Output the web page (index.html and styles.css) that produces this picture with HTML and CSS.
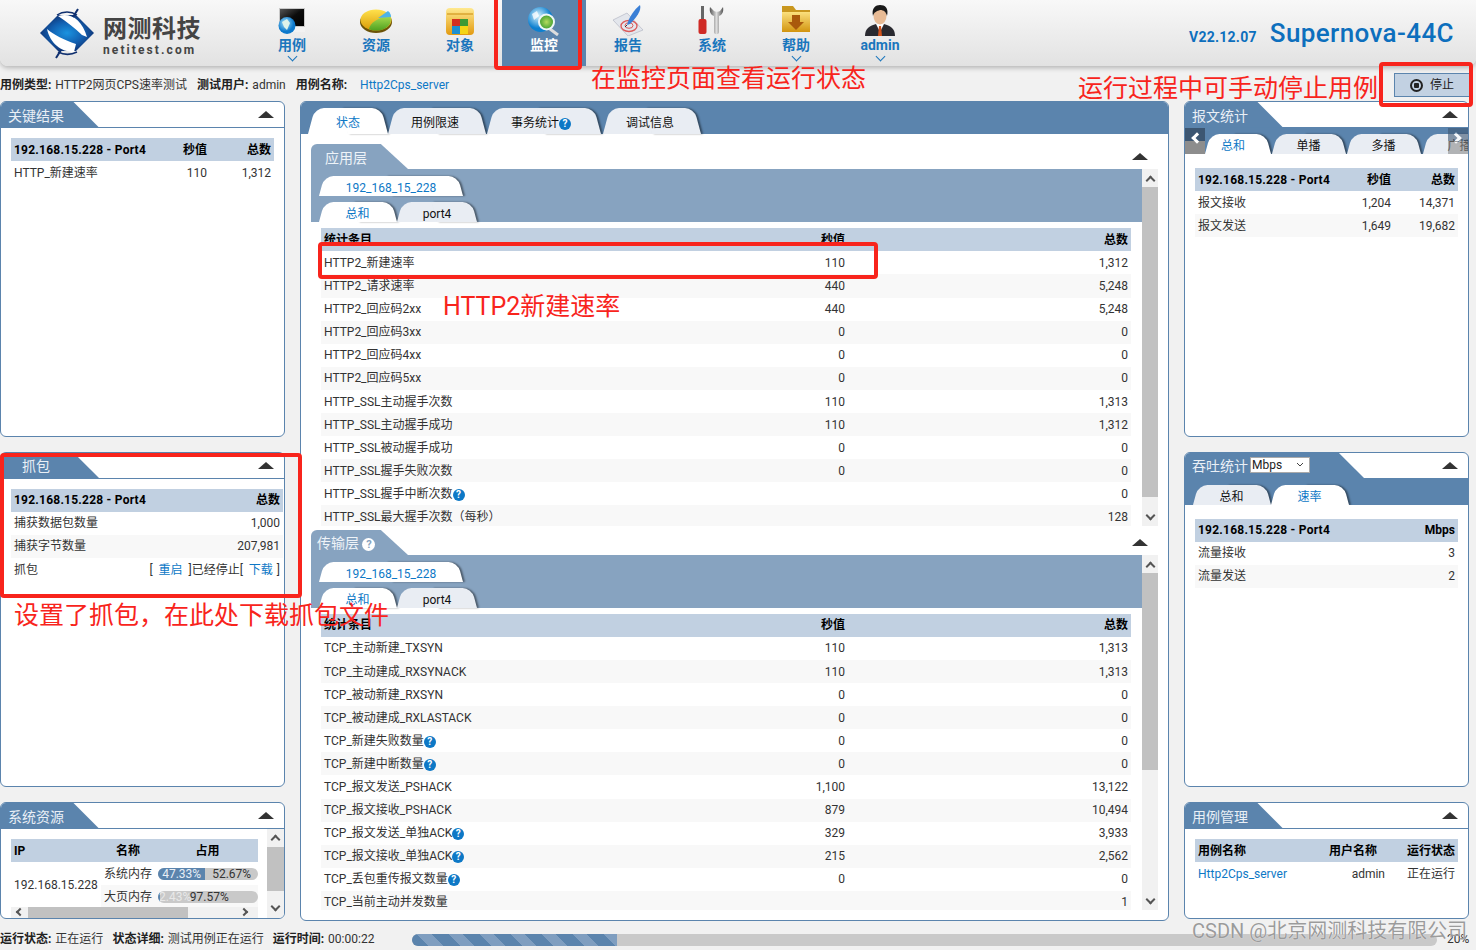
FILE: index.html
```html
<!DOCTYPE html>
<html lang="zh-CN">
<head>
<meta charset="utf-8">
<title>Supernova-44C</title>
<link rel="stylesheet" href="styles.css">
</head>
<body>
<header class="topbar">
  <div class="logo">
    <svg class="logo-mark" width="56" height="52" viewBox="0 0 56 52">
      <defs><radialGradient id="lg" cx=".5" cy=".5" r=".55"><stop offset="0" stop-color="#1a93e0"/><stop offset=".55" stop-color="#125fb0"/><stop offset="1" stop-color="#10306f"/></radialGradient></defs>
      <path d="M1 25 L19 7 H37 L55 25 L37 43 H19 Z" fill="url(#lg)"/>
      <path d="M19 8 C31 4 43 11 48 29 L43 27 C36 20 28 14 19 8 Z" fill="#fff"/>
      <path d="M8 21 C15 27 25 32 37 36 L35 44 C22 44 11 35 8 21 Z" fill="#fff"/>
      <path d="M39 1 L34 9 M17 50 L22 42" stroke="#10306f" stroke-width="2" fill="none"/>
      <path d="M18 7 C24 3 32 3 38 7 M38 44 C32 47 25 47 19 44" stroke="#10306f" stroke-width="1.5" fill="none"/>
    </svg>
    <div class="logo-text">
      <div class="logo-cn">网测科技</div>
      <div class="logo-en">netitest.com</div>
    </div>
  </div>
  <nav class="nav">
    <div class="nav-item">
      <svg width="32" height="31" viewBox="0 0 32 31"><defs><radialGradient id="g1" cx=".4" cy=".35"><stop offset="0" stop-color="#a6e2f9"/><stop offset="1" stop-color="#0b78cc"/></radialGradient><linearGradient id="s1" x1="0" y1="0" x2="1" y2="1"><stop offset="0" stop-color="#555"/><stop offset=".5" stop-color="#0c0c0c"/><stop offset="1" stop-color="#000"/></linearGradient></defs><path d="M3 3 H29 V24 H3 Z" fill="#c9c9c9"/><rect x="4" y="4" width="24" height="17" fill="url(#s1)"/><path d="M10 22 H29 V27 H10 Z" fill="#f2f2f2"/><circle cx="11" cy="20.5" r="8.5" fill="url(#g1)"/><path d="M6 17 L11 14 L14 18 L11 25 L8 22 Z" fill="#dff3ea"/></svg>
      <span class="nav-label">用例</span><i class="nav-chev"></i>
    </div>
    <div class="nav-item">
      <svg width="32" height="31" viewBox="0 0 32 31"><defs><linearGradient id="g2" x1="0" y1="0" x2="0" y2="1"><stop offset="0" stop-color="#ffe24d"/><stop offset="1" stop-color="#d99a06"/></linearGradient><linearGradient id="g2b" x1="0" y1="0" x2="0" y2="1"><stop offset="0" stop-color="#a8dc4f"/><stop offset="1" stop-color="#4fa120"/></linearGradient></defs><ellipse cx="16" cy="17" rx="16" ry="11" fill="#6b5308"/><ellipse cx="16" cy="15" rx="15.5" ry="10.5" fill="url(#g2)"/><path d="M9 24 C10 18 18 12 30 11 C32 16 30 21 24 24 C19 26 13 26 9 24 Z" fill="url(#g2b)"/><path d="M18 13 L28 6 C30 8 31 9 31 12 Z" fill="#4eb3e8"/></svg>
      <span class="nav-label">资源</span>
    </div>
    <div class="nav-item">
      <svg width="32" height="31" viewBox="0 0 32 31"><defs><linearGradient id="g3" x1="0" y1="0" x2="0" y2="1"><stop offset="0" stop-color="#ffe98f"/><stop offset="1" stop-color="#e29a10"/></linearGradient></defs><path d="M2 7 Q2 3 6 3 H26 Q30 3 30 7 V26 Q30 30 26 30 H6 Q2 30 2 26 Z" fill="url(#g3)"/><path d="M3 9 H29" stroke="#c98a10"/><rect x="8" y="14" width="8" height="7" fill="#d22f1f"/><rect x="16" y="14" width="8" height="7" fill="#3d9a34"/><rect x="8" y="21" width="8" height="8" fill="#1b8fd0"/><rect x="16" y="21" width="8" height="8" fill="#f4d516"/></svg>
      <span class="nav-label">对象</span>
    </div>
    <div class="nav-item is-active">
      <svg width="32" height="31" viewBox="0 0 32 31"><defs><radialGradient id="g4" cx=".4" cy=".35"><stop offset="0" stop-color="#d6f3fd"/><stop offset="1" stop-color="#0d80d0"/></radialGradient><radialGradient id="g4b"><stop offset="0" stop-color="#b6dc5e"/><stop offset="1" stop-color="#3c9c2f"/></radialGradient></defs><circle cx="12.5" cy="14.5" r="12.5" fill="url(#g4)"/><path d="M22 24 L30 30" stroke="#ddd" stroke-width="3"/><circle cx="18.5" cy="17" r="7.5" fill="url(#g4b)" stroke="#eef6f6" stroke-width="2"/><path d="M4 9 L9 6 L11 11 L6 15 Z" fill="#fff" opacity=".75"/></svg>
      <span class="nav-label">监控</span>
    </div>
    <div class="nav-item">
      <svg width="32" height="31" viewBox="0 0 32 31"><path d="M1 15 L15 8 L31 25 L16 31 Z" fill="#e3e6ec" stroke="#b4b8c4" stroke-width=".7"/><ellipse cx="17" cy="21" rx="8" ry="5.5" fill="none" stroke="#dc5a5a" stroke-width="1.3"/><ellipse cx="17" cy="20.5" rx="4" ry="2.8" fill="none" stroke="#dc5a5a"/><path d="M28 0 C30 5 24 13 18 19 L15 20 C17 12 22 5 28 0 Z" fill="#3a7fd6"/><path d="M15 20 L13 22" stroke="#333"/></svg>
      <span class="nav-label">报告</span>
    </div>
    <div class="nav-item">
      <svg width="32" height="31" viewBox="0 0 32 31"><defs><linearGradient id="g6" x1="0" y1="0" x2="1" y2="0"><stop offset="0" stop-color="#555"/><stop offset=".5" stop-color="#ddd"/><stop offset="1" stop-color="#555"/></linearGradient></defs><rect x="5" y="1" width="3" height="13" fill="#666"/><rect x="2.500" y="14" width="8" height="15" rx="2" fill="#cf2a25"/><path d="M14 2 C13 7 15 10 18 11 V27 C18 30 23 30 23 27 V11 C26 10 28 7 27 2 L24 6 C23 7 19 7 18 6 Z" fill="url(#g6)"/></svg>
      <span class="nav-label">系统</span>
    </div>
    <div class="nav-item">
      <svg width="32" height="31" viewBox="0 0 32 31"><defs><linearGradient id="g5" x1="0" y1="0" x2="0" y2="1"><stop offset="0" stop-color="#fbe07d"/><stop offset="1" stop-color="#d2940f"/></linearGradient></defs><path d="M2 1 H13 L16 5 H30 V27 H2 Z" fill="#c9971f"/><path d="M2 7 H30 V27 H2 Z" fill="url(#g5)"/><path d="M12 10 H20 V17 H24 L16 25 L8 17 H12 Z" fill="#a9590c"/></svg>
      <span class="nav-label">帮助</span><i class="nav-chev"></i>
    </div>
    <div class="nav-item">
      <svg width="32" height="31" viewBox="0 0 32 31"><path d="M1 31 C1 23 6 21 12 19 H20 C26 21 31 23 31 31 Z" fill="#2a2a30"/><path d="M12 19 L16 27 L20 19 Z" fill="#fff"/><path d="M15 21 H17 L18 31 H14 Z" fill="#d2521b"/><ellipse cx="16" cy="11" rx="6.500" ry="8.500" fill="#e8bb95"/><path d="M9 11 C7 3 12 0 16 0 C21 0 25 3 23 11 C22 7 20 5 16 5 C13 6 10 7 9 11 Z" fill="#1a1a1a"/></svg>
      <span class="nav-label">admin</span><i class="nav-chev"></i>
    </div>
  </nav>
  <div class="brand">
    <span class="brand-ver">V22.12.07</span>
    <span class="brand-name">Supernova-44C</span>
  </div>
</header>

<div class="infobar">
  <div class="info-text">
    <span><b>用例类型:</b> HTTP2网页CPS速率测试</span>
    <span><b>测试用户:</b> admin</span>
    <span class="info-case"><b>用例名称:</b> <a class="link">Http2Cps_server</a></span>
  </div>
  <button class="stop-btn"><i class="stop-ico"></i>停止</button>
</div>

<main class="main">
  <section class="col">
    <div class="panel p-key">
      <div class="panel-head"><div class="ptitle">关键结果</div><i class="tri"></i></div>
      <div class="dtable t-key">
        <div class="row head"><span class="ipx">192.168.15.228 - Port4</span><span class="r">秒值</span><span class="r">总数</span></div>
        <div class="row"><span>HTTP_新建速率</span><span class="r">110</span><span class="r">1,312</span></div>
      </div>
    </div>
    <div class="panel p-cap">
      <div class="panel-head"><div class="ptitle ptitle-cap">抓包</div><i class="tri"></i></div>
      <div class="dtable t-cap">
        <div class="row head"><span class="ipx">192.168.15.228 - Port4</span><span class="r">总数</span></div>
        <div class="row"><span>捕获数据包数量</span><span class="r">1,000</span></div>
        <div class="row"><span>捕获字节数量</span><span class="r">207,981</span></div>
        <div class="row row-act"><span>抓包</span><span class="r">[ &nbsp;<a class="link">重启</a>&nbsp; ]已经停止[ &nbsp;<a class="link link-last">下载</a>&nbsp; ]</span></div>
      </div>
    </div>
    <div class="panel p-sys">
      <div class="panel-head"><div class="ptitle ptitle-low">系统资源</div><i class="tri"></i></div>
      <div class="sys-body">
        <div class="sys-main">
          <div class="sys-table">
            <div class="sys-head"><span class="sys-ip">IP</span><span class="sys-nm">名称</span><span class="sys-use">占用</span></div>
            <div class="sys-data">
              <div class="sys-ipcell">192.168.15.228</div>
              <div class="sys-rows">
                <div class="sys-row"><span class="sys-label">系统内存</span><div class="bar"><div class="bar-fill" style="width:47.33%">47.33%</div><div class="bar-rest">52.67%</div></div></div>
                <div class="sys-row alt"><span class="sys-label">大页内存</span><div class="bar"><div class="bar-fill small" style="width:2.43%">2.43%</div><div class="bar-rest">97.57%</div></div></div>
              </div>
            </div>
          </div>
          <div class="hbar"><i class="chev-l"></i><div class="hthumb"></div><i class="chev-r"></i></div>
        </div>
        <div class="vbar vbar-sys"><div class="vbtn"><i class="chev-u"></i></div><div class="vtrack"><div class="thumb thumb-s"></div></div><div class="vbtn"><i class="chev-d"></i></div></div>
      </div>
    </div>
  </section>

  <section class="panel center">
    <div class="tabs-top">
      <div class="tab t80 on">状态</div>
      <div class="tab t97 mr2">用例限速</div>
      <div class="tab t113 mr3">事务统计<i class="q">?</i></div>
      <div class="tab t97">调试信息</div>
    </div>
    <div class="center-body">
      <div class="sub sub-a">
        <div class="sub-head"><div class="stitle">应用层</div><i class="tri"></i></div>
        <div class="sub-body">
          <div class="sub-content">
            <div class="band">
              <div class="tabrow"><div class="tab t144 on small-h">192_168_15_228</div></div>
              <div class="tabrow"><div class="tab t77 on small-h">总和</div><div class="tab t80 small-h">port4</div></div>
            </div>
            <div class="dtable t-main">
              <div class="row head"><span>统计条目</span><span class="r">秒值</span><span class="r">总数</span></div>
              <div class="row"><span>HTTP2_新建速率</span><span class="r">110</span><span class="r">1,312</span></div>
              <div class="row"><span>HTTP2_请求速率</span><span class="r">440</span><span class="r">5,248</span></div>
              <div class="row"><span>HTTP2_回应码2xx</span><span class="r">440</span><span class="r">5,248</span></div>
              <div class="row"><span>HTTP2_回应码3xx</span><span class="r">0</span><span class="r">0</span></div>
              <div class="row"><span>HTTP2_回应码4xx</span><span class="r">0</span><span class="r">0</span></div>
              <div class="row"><span>HTTP2_回应码5xx</span><span class="r">0</span><span class="r">0</span></div>
              <div class="row"><span>HTTP_SSL主动握手次数</span><span class="r">110</span><span class="r">1,313</span></div>
              <div class="row"><span>HTTP_SSL主动握手成功</span><span class="r">110</span><span class="r">1,312</span></div>
              <div class="row"><span>HTTP_SSL被动握手成功</span><span class="r">0</span><span class="r">0</span></div>
              <div class="row"><span>HTTP_SSL握手失败次数</span><span class="r">0</span><span class="r">0</span></div>
              <div class="row"><span>HTTP_SSL握手中断次数<i class="q">?</i></span><span class="r"></span><span class="r">0</span></div>
              <div class="row"><span>HTTP_SSL最大握手次数（每秒）</span><span class="r"></span><span class="r">128</span></div>
            </div>
          </div>
          <div class="vbar"><div class="vbtn"><i class="chev-u"></i></div><div class="vtrack"><div class="thumb thumb-a"></div></div><div class="vbtn"><i class="chev-d"></i></div></div>
        </div>
      </div>
      <div class="sub sub-b">
        <div class="sub-head"><div class="stitle stitle-b">传输层 <i class="q q-light">?</i></div><i class="tri"></i></div>
        <div class="sub-body">
          <div class="sub-content">
            <div class="band">
              <div class="tabrow"><div class="tab t144 on small-h">192_168_15_228</div></div>
              <div class="tabrow"><div class="tab t77 on small-h">总和</div><div class="tab t80 small-h">port4</div></div>
            </div>
            <div class="dtable t-main">
              <div class="row head"><span>统计条目</span><span class="r">秒值</span><span class="r">总数</span></div>
              <div class="row"><span>TCP_主动新建_TXSYN</span><span class="r">110</span><span class="r">1,313</span></div>
              <div class="row"><span>TCP_主动建成_RXSYNACK</span><span class="r">110</span><span class="r">1,313</span></div>
              <div class="row"><span>TCP_被动新建_RXSYN</span><span class="r">0</span><span class="r">0</span></div>
              <div class="row"><span>TCP_被动建成_RXLASTACK</span><span class="r">0</span><span class="r">0</span></div>
              <div class="row"><span>TCP_新建失败数量<i class="q">?</i></span><span class="r">0</span><span class="r">0</span></div>
              <div class="row"><span>TCP_新建中断数量<i class="q">?</i></span><span class="r">0</span><span class="r">0</span></div>
              <div class="row"><span>TCP_报文发送_PSHACK</span><span class="r">1,100</span><span class="r">13,122</span></div>
              <div class="row"><span>TCP_报文接收_PSHACK</span><span class="r">879</span><span class="r">10,494</span></div>
              <div class="row"><span>TCP_报文发送_单独ACK<i class="q">?</i></span><span class="r">329</span><span class="r">3,933</span></div>
              <div class="row"><span>TCP_报文接收_单独ACK<i class="q">?</i></span><span class="r">215</span><span class="r">2,562</span></div>
              <div class="row"><span>TCP_丢包重传报文数量<i class="q">?</i></span><span class="r">0</span><span class="r">0</span></div>
              <div class="row"><span>TCP_当前主动并发数量</span><span class="r"></span><span class="r">1</span></div>
            </div>
          </div>
          <div class="vbar"><div class="vbtn"><i class="chev-u"></i></div><div class="vtrack"><div class="thumb thumb-b"></div></div><div class="vbtn"><i class="chev-d"></i></div></div>
        </div>
      </div>
    </div>
  </section>

  <section class="col">
    <div class="panel p-key">
      <div class="panel-head"><div class="ptitle">报文统计</div><i class="tri"></i></div>
      <div class="rband">
        <div class="tab t65 on small-h">总和</div>
        <div class="tab t73 small-h">单播</div>
        <div class="tab t73 small-h">多播</div>
        <div class="tab t73 small-h tab-cut">广播</div>
        <div class="scroller scroller-l"><i class="sc-l"></i></div>
        <div class="scroller scroller-r"><i class="sc-r"></i></div>
      </div>
      <div class="dtable t-pkt">
        <div class="row head"><span class="ipx">192.168.15.228 - Port4</span><span class="r">秒值</span><span class="r">总数</span></div>
        <div class="row"><span>报文接收</span><span class="r">1,204</span><span class="r">14,371</span></div>
        <div class="row"><span>报文发送</span><span class="r">1,649</span><span class="r">19,682</span></div>
      </div>
    </div>
    <div class="panel p-cap">
      <div class="panel-head"><div class="ptitle ptitle-wide">吞吐统计<select class="unit"><option>Mbps</option></select></div><i class="tri"></i></div>
      <div class="rband rband-2">
        <div class="tab t77 small-h">总和</div>
        <div class="tab t77 on small-h">速率</div>
      </div>
      <div class="dtable t-pkt t-thru">
        <div class="row head"><span class="ipx">192.168.15.228 - Port4</span><span class="r">Mbps</span></div>
        <div class="row"><span>流量接收</span><span class="r">3</span></div>
        <div class="row"><span>流量发送</span><span class="r">2</span></div>
      </div>
    </div>
    <div class="panel p-sys">
      <div class="panel-head"><div class="ptitle ptitle-low">用例管理</div><i class="tri"></i></div>
      <div class="dtable t-case">
        <div class="row head"><span>用例名称</span><span class="r hd-user">用户名称</span><span class="r">运行状态</span></div>
        <div class="row"><span><a class="link">Http2Cps_server</a></span><span class="r td-user">admin</span><span class="r">正在运行</span></div>
      </div>
    </div>
  </section>
</main>

<footer class="status">
  <div class="status-text">
    <span><b>运行状态:</b> 正在运行</span>
    <span><b>状态详细:</b> 测试用例正在运行</span>
    <span><b>运行时间:</b> 00:00:22</span>
  </div>
  <div class="progress"><div class="progress-fill"></div></div>
  <div class="pct">20%</div>
</footer>

<div class="mark box-mon"></div>
<div class="mark box-stop"></div>
<div class="mark box-row"></div>
<div class="mark box-cap"></div>
<div class="note note-mon">在监控页面查看运行状态</div>
<div class="note note-stop">运行过程中可手动停止用例</div>
<div class="note note-http">HTTP2新建速率</div>
<div class="note note-cap">设置了抓包，在此处下载抓包文件</div>
<div class="watermark">CSDN @北京网测科技有限公司</div>
</body>
</html>
```
FILE: styles.css
```css
* { box-sizing: border-box; }
html, body { height: 100%; }
body {
  margin: 0;
  width: 1476px;
  height: 950px;
  overflow: hidden;
  position: relative;
  background: #f1f1f1;
  color: #333;
  font: 12px/1.2 Roboto, "Noto Sans CJK SC", sans-serif;
}
b { font-weight: 700; color: #222; margin-right: 1px; }
i { font-style: normal; }
.link { color: #0d78c6; }
.link-last { margin-right: -2px; }

/* top bar */
.topbar {
  height: 66px;
  display: flex;
  background: linear-gradient(#f8f8f8, #e2e2e2);
  border-radius: 0 0 8px 8px;
  box-shadow: 0 2px 5px rgba(0, 0, 0, .25);
  padding-right: 22px;
}
.logo { width: 250px; display: flex; padding: 8px 0 0 39px; gap: 8px; }
.logo-mark { flex: none; }
.logo-text { padding-top: 7px; color: #444; }
.logo-cn { font-size: 24px; line-height: 28px; font-weight: 700; letter-spacing: .5px; }
.logo-en { font-size: 12px; line-height: 14px; font-weight: 700; letter-spacing: 2.1px; }
.nav { display: flex; }
.nav-item {
  width: 84px;
  display: flex;
  flex-direction: column;
  align-items: center;
  padding-top: 5px;
}
.nav-item svg { flex: none; }
.nav-label { margin-top: 1px; font-size: 14px; line-height: 16px; font-weight: 700; color: #1a76bd; }
.nav-chev {
  width: 7px; height: 7px; margin-top: 0;
  border-right: 1.5px solid #1a76bd;
  border-bottom: 1.5px solid #1a76bd;
  transform: rotate(45deg);
}
.is-active { background: #5b84ad; }
.is-active .nav-label { color: #fff; }
.brand { margin-left: auto; display: flex; align-items: baseline; gap: 13px; padding-top: 17px; color: #0d6fbd; }
.brand-ver { font-size: 14px; font-weight: 700; letter-spacing: .25px; }
.brand-name { font-size: 26px; font-weight: 500; line-height: 32px; letter-spacing: .4px; }

/* info line */
.infobar { height: 35px; display: flex; justify-content: space-between; padding: 7px 6px 4px 0; }
.info-text { display: flex; gap: 10px; padding-top: 5px; }
.info-case b { margin-right: 10px; }
.stop-btn {
  width: 76px; height: 24px;
  background: #c2d1e2;
  border: 1px solid #5b84ad;
  color: #222;
  font: inherit;
  display: flex; align-items: center; justify-content: center; gap: 7px;
  padding: 0;
}
.stop-ico { width: 13px; height: 13px; border-radius: 50%; border: 2px solid #222; position: relative; }
.stop-ico::after { content: ""; position: absolute; inset: 2px; background: #222; border-radius: 1px; }

/* layout */
.main { display: flex; gap: 15px; height: 820px; }
.col { width: 285px; flex: none; display: flex; flex-direction: column; gap: 15px; }
.panel { background: #fff; border: 1px solid #5b84ad; border-radius: 6px; overflow: hidden; }
.col .panel { flex: none; }
.p-key { height: 335.6px; }
.p-cap { height: 335.4px; }
.p-sys { height: 117px; }
.panel-head {
  height: 26px;
  display: flex; justify-content: space-between; align-items: center;
  border-bottom: 1px solid #5b84ad;
}
.ptitle {
  width: 98px; height: 26px;
  background: #5b84ad;
  color: #e9eff6;
  font-size: 14px; line-height: 29px;
  padding-left: 7px;
  clip-path: polygon(0 0, calc(100% - 26px) 0, 100% 100%, 0 100%);
  flex: none;
}
.ptitle-low { line-height: 31px; }
.ptitle-cap { padding-left: 21px; }
.ptitle-wide { width: 179px; display: flex; align-items: center; padding-top: 2px; }
.unit {
  appearance: none;
  width: 60px; height: 16px; margin: 0 0 3px 2px;
  padding: 0 0 0 1px; border: 1px solid #aaa; border-radius: 0;
  background: #fff url("data:image/svg+xml,%3Csvg xmlns='http://www.w3.org/2000/svg' width='8' height='5'%3E%3Cpath d='M1 1l3 3 3-3' fill='none' stroke='%23444'/%3E%3C/svg%3E") no-repeat right 5px center;
  color: #222; font: 12px Roboto, sans-serif;
}
.tri {
  flex: none; width: 0; height: 0; margin-right: 10px;
  border-left: 8px solid transparent;
  border-right: 8px solid transparent;
  border-bottom: 7px solid #333;
}

/* tables */
.dtable { margin: 10px 10px 0; }
.row { display: grid; height: 23.1px; align-items: center; line-height: 14px; white-space: nowrap; }
.row > span { padding: 0 3px; }
.row:nth-child(odd) { background: #f8f8f8; }
.row.head { background: #c1d0e1; color: #000; font-weight: 700; }
.row-act { padding-top: 1px; }
.ipx { letter-spacing: .23px; }
.r { text-align: right; }
.t-key .row { grid-template-columns: 1fr 60px 64px; }
.t-cap { margin-right: 1px; }
.t-cap .row { grid-template-columns: 1fr auto; }
.t-main { margin: 6px 0 0 10px; width: 810px; }
.sub-a .t-main { margin-top: 6.3px; }
.sub-b .t-main { margin-top: 5.8px; }
.t-main .row { grid-template-columns: 1fr 100px 283px; }
.t-pkt { margin-top: 14px; }
.t-pkt .row { grid-template-columns: 1fr 60px 64px; }
.t-thru .row { grid-template-columns: 1fr auto; }
.t-case .row { grid-template-columns: 1fr 87px 59px; }
.row > .td-user { padding-right: 14px; }
.row > .hd-user { padding-right: 22px; }

/* help icon */
.q {
  display: inline-block;
  width: 12px; height: 12px;
  border-radius: 50%;
  background: #0d78c6;
  color: #fff;
  font: 700 10px/12px Roboto, sans-serif;
  text-align: center;
  vertical-align: 0;
}
.q-light { width: 13px; height: 13px; line-height: 13px; font-size: 11px; background: #fff; color: #87a3c0; vertical-align: 0; }

/* tabs */
.tab {
  position: relative; z-index: 0;
  flex: none;
  height: 26px;
  padding-top: 5px;
  display: flex; align-items: center; justify-content: center;
  color: #111;
  white-space: nowrap;
}
.tab::before, .tab::after {
  content: ""; position: absolute; z-index: -1; top: 0; bottom: 0;
  background: #e9edf3;
  transform-origin: bottom;
}
.tab::before { left: 0; right: 50%; border-radius: 9px 0 0 0; transform: skewX(-15deg); }
.tab::after { right: 0; left: 50%; border-radius: 0 9px 0 0; transform: skewX(15deg); box-shadow: 2px 0 2px rgba(0, 0, 0, .45); }
.tab.on { color: #0d78c6; }
.tab.on::before, .tab.on::after { background: #fff; }
.small-h { height: 20px; }
.t65 { width: 65px; padding-right: 9px; }
.t73 { width: 73px; margin-left: 2px; }
.t77 { width: 77px; }
.t80 { width: 80px; }
.t97 { width: 97px; padding-right: 3px; }
.t113 { width: 113px; padding-right: 5px; }
.t144 { width: 144px; }
.mr2 { margin-right: 2px; }
.mr3 { margin-right: 3px; }

/* centre */
.center { width: 869px; flex: none; }
.tabs-top {
  height: 32px;
  background: #5b84ad;
  display: flex; align-items: flex-end;
  padding-left: 7px;
}
.center-body { padding: 10px 10px 0; }
.sub { display: flex; flex-direction: column; }
.sub-a { height: 382px; margin-bottom: 4px; }
.sub-b { height: 380px; }
.sub-head { height: 25px; display: flex; justify-content: space-between; align-items: center; flex: none; }
.stitle {
  width: 97px; height: 25px;
  background: #87a3c0;
  color: #eef3f8;
  font-size: 14px; line-height: 28px;
  padding-left: 14px;
  border-top-left-radius: 6px;
  clip-path: polygon(0 0, 72% 0, 100% 100%, 0 100%);
}
.stitle-b { padding-left: 6px; line-height: 27px; }
.sub-body { flex: 1; min-height: 0; display: flex; }
.sub-content { width: 831px; overflow: hidden; }
.band { height: 53px; background: #87a3c0; padding: 7px 0 0 8px; }
.tabrow { display: flex; margin-bottom: 6px; gap: 1px; }

/* scrollbars */
.vbar { width: 16px; flex: none; background: #f1f1f1; display: flex; flex-direction: column; }
.vbar-sys { width: 17px; }
.vbtn { height: 18px; flex: none; display: flex; align-items: center; justify-content: center; }
.vtrack { flex: 1; min-height: 0; }
.thumb { background: #c1c1c1; }
.thumb-a { height: 310px; }
.thumb-b { height: 197px; }
.thumb-s { height: 44px; }
.chev-u, .chev-d, .chev-l, .chev-r {
  width: 7px; height: 7px; flex: none;
  border-top: 2px solid #555; border-right: 2px solid #555;
}
.chev-u { transform: translateY(2px) rotate(-45deg); }
.chev-d { transform: translateY(-2px) rotate(135deg); }
.chev-l { transform: rotate(-135deg); }
.chev-r { transform: rotate(45deg); }

/* right band */
.rband {
  position: relative;
  height: 26px;
  background: #5b84ad;
  display: flex; align-items: flex-end;
  padding-left: 20px;
  overflow: hidden;
}
.rband-2 { padding-left: 8px; gap: 1px; }
.scroller {
  position: absolute; top: 0; bottom: 0; width: 20px;
  background: linear-gradient(#3c5672 50%, #8d8d8d 50%);
  display: flex; align-items: center; justify-content: center;
}
.scroller-l { left: 0; }
.scroller-r { right: 0; opacity: .6; }
.sc-l, .sc-r { width: 8px; height: 8px; border-top: 3px solid #fff; border-right: 3px solid #fff; }
.sc-l { transform: translate(2px, -3px) rotate(-135deg); }
.sc-r { transform: translate(-2px, -3px) rotate(45deg); }
.tab-cut { margin-left: 3px; }

/* system resources */
.sys-body { display: flex; height: 89px; }
.sys-main { width: 266px; flex: none; padding: 10px 9px 0 10px; display: flex; flex-direction: column; }
.sys-table { flex: 1; min-height: 0; }
.sys-head {
  height: 23px; background: #c1d0e1;
  padding-top: 1px;
  color: #000; font-weight: 700;
  display: grid; grid-template-columns: 90px 52px 1fr; align-items: center;
}
.sys-ip { padding-left: 3px; }
.sys-nm { text-align: center; margin-left: 2px; }
.sys-use { text-align: center; padding-left: 4px; }
.sys-data { display: flex; height: 46px; }
.sys-ipcell { width: 90px; flex: none; padding-left: 3px; align-self: center; white-space: nowrap; }
.sys-rows { flex: 1; }
.sys-row { height: 23px; display: flex; align-items: center; padding: 1px 0 0 3px; gap: 6px; white-space: nowrap; }
.sys-row.alt { background: #f8f8f8; }
.sys-label { width: 48px; flex: none; }
.bar { flex: 1; min-width: 0; height: 12px; display: flex; border-radius: 6px; overflow: hidden; background: #c9c9c9; line-height: 12px; }
.bar-fill { background: #5b84ad; color: #e9eff6; text-align: center; flex: none; }
.bar-fill.small { overflow: visible; color: #e8e8e8; text-indent: 1px; }
.bar-rest { flex: 1; text-align: center; color: #333; }
.hbar { height: 11px; flex: none; background: #f1f1f1; display: flex; align-items: center; padding: 0 6px; margin-top: auto; }
.hbar .chev-l, .hbar .chev-r { width: 6px; height: 6px; }
.hthumb { width: 160px; height: 11px; background: #c1c1c1; margin: 0 53px 0 5px; }

/* status */
.status { height: 29px; padding-top: 8px; display: flex; align-items: center; }
.status-text { width: 412px; flex: none; display: flex; gap: 9px; }
.progress { width: 1025px; height: 12px; background: #c9c9c9; border-radius: 6px; overflow: hidden; flex: none; }
.progress-fill {
  width: 20%; height: 100%;
  background: repeating-linear-gradient(45deg, #5b84ad 0 12px, #7f9ec0 12px 22px);
}
.pct { margin-left: 10px; }

/* annotations drawn over the page */
.mark { position: absolute; border: 4px solid #f8241c; border-radius: 4px; }
.box-mon { left: 494px; top: -4px; width: 88px; height: 74px; }
.box-stop { left: 1379px; top: 62px; width: 94px; height: 45px; }
.box-row { left: 318px; top: 242px; width: 560px; height: 37px; }
.box-cap { left: 0; top: 453px; width: 302px; height: 145px; }
.note { position: absolute; color: #f8241c; font: 25px/30px "Noto Sans CJK SC", sans-serif; white-space: nowrap; }
.note-mon { left: 591px; top: 61px; }
.note-stop { left: 1078px; top: 71px; }
.note-http { left: 443px; top: 292px; font-family: Roboto, "Noto Sans CJK SC", sans-serif; }
.note-cap { left: 14px; top: 598px; }
.watermark {
  position: absolute; left: 1192px; top: 918px;
  color: #9b9b9b; font: 20px/26px Roboto, "Noto Sans CJK SC", sans-serif;
  white-space: nowrap;
  text-shadow: 0 0 1px #fff;
}
```
